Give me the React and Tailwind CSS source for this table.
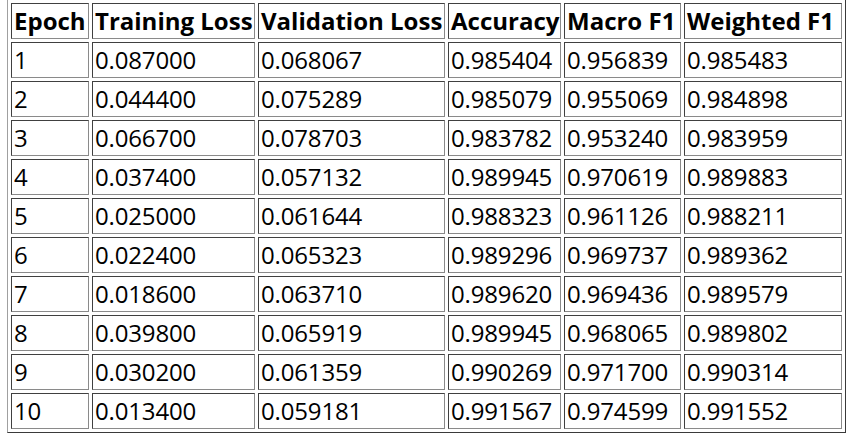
import React from 'react';

const rows = [
  ['1', '0.087000', '0.068067', '0.985404', '0.956839', '0.985483'],
  ['2', '0.044400', '0.075289', '0.985079', '0.955069', '0.984898'],
  ['3', '0.066700', '0.078703', '0.983782', '0.953240', '0.983959'],
  ['4', '0.037400', '0.057132', '0.989945', '0.970619', '0.989883'],
  ['5', '0.025000', '0.061644', '0.988323', '0.961126', '0.988211'],
  ['6', '0.022400', '0.065323', '0.989296', '0.969737', '0.989362'],
  ['7', '0.018600', '0.063710', '0.989620', '0.969436', '0.989579'],
  ['8', '0.039800', '0.065919', '0.989945', '0.968065', '0.989802'],
  ['9', '0.030200', '0.061359', '0.990269', '0.971700', '0.990314'],
  ['10', '0.013400', '0.059181', '0.991567', '0.974599', '0.991552'],
];

const cell =
  'h-[36px] px-[2px] py-px text-left align-middle whitespace-nowrap overflow-hidden border border-t-[#404040] border-l-[#404040] border-b-[#8a8a8a] border-r-[#8a8a8a]';

export default function App() {
  return (
    <div className="w-[847px] h-[438px] overflow-hidden bg-white">
      <table
        className="ml-[7px] -mt-px w-[839px] table-fixed border-separate border-spacing-[3px] border border-t-[#a0a0a0] border-l-[#a0a0a0] border-b-[#3a3a3a] border-r-[#3a3a3a] text-[24px] leading-[32px] text-black"
        style={{ fontFamily: '"Open Sans", "Noto Sans", sans-serif' }}
      >
        <thead>
          <tr>
            <th className={`${cell} w-[78px] font-bold`}>Epoch</th>
            <th className={`${cell} w-[163px] font-bold`}>Training Loss</th>
            <th className={`${cell} w-[187px] font-bold`}>Validation Loss</th>
            <th className={`${cell} w-[113px] font-bold`}>Accuracy</th>
            <th className={`${cell} w-[117px] font-bold`}>Macro F1</th>
            <th className={`${cell} w-[158px] font-bold`}>Weighted F1</th>
          </tr>
        </thead>
        <tbody>
          {rows.map((r) => (
            <tr key={r[0]}>
              {r.map((v, i) => (
                <td key={i} className={`${cell} font-normal tracking-[-0.15px]`}>
                  {v}
                </td>
              ))}
            </tr>
          ))}
        </tbody>
      </table>
    </div>
  );
}
